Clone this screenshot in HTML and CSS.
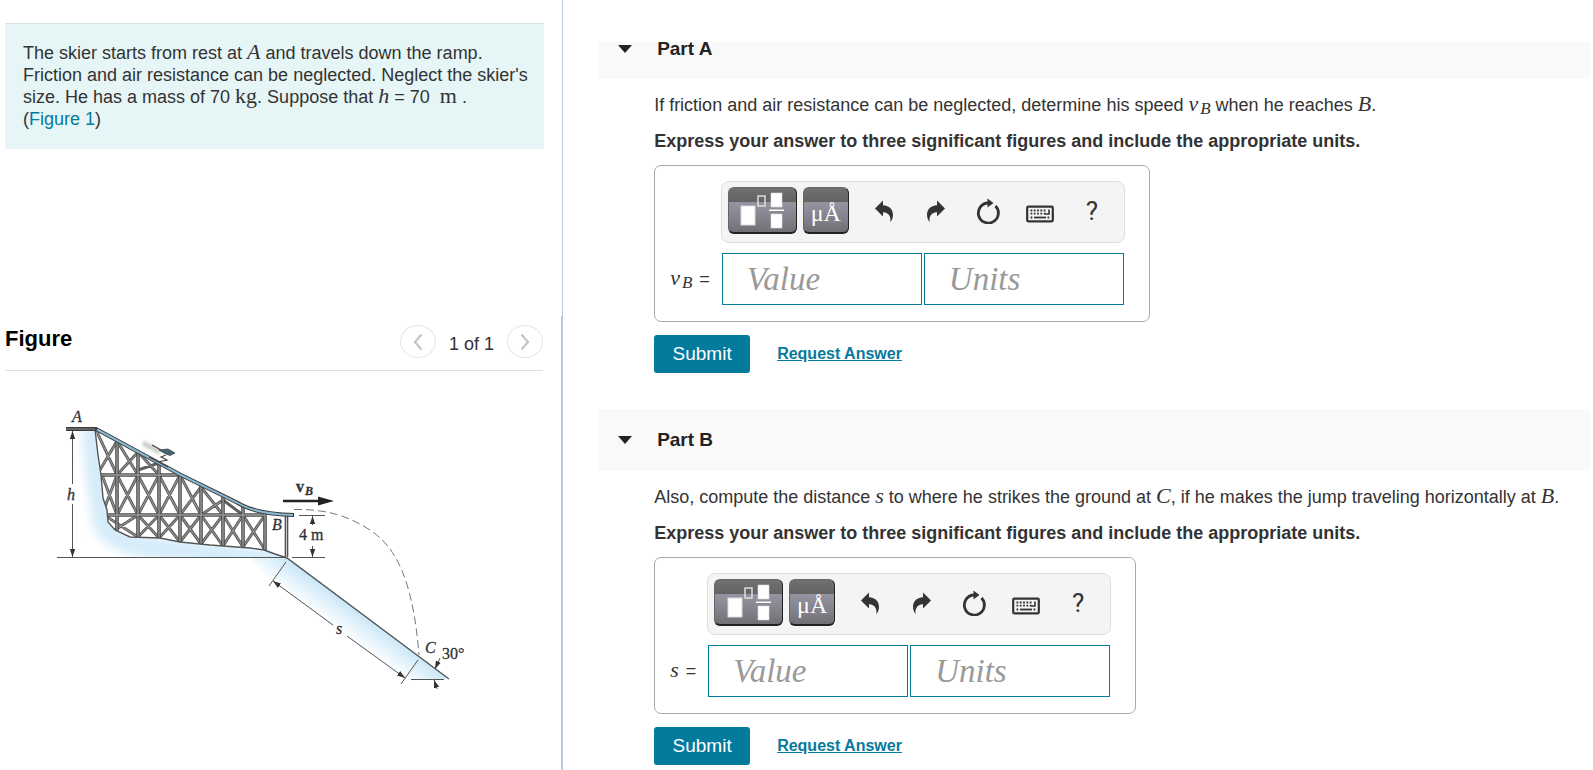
FILE: index.html
```html
<!DOCTYPE html>
<html lang="en">
<head>
<meta charset="utf-8">
<title>Skier on a ramp</title>
<link rel="stylesheet" href="styles.css">
</head>
<body>
<svg class="sprite" width="0" height="0" aria-hidden="true">
  <symbol id="i-template" viewBox="0 0 44 37">
    <rect x="1" y="14" width="14" height="19" fill="#fff" stroke="#dcdce0"/>
    <rect x="18" y="4" width="7" height="10" fill="none" stroke="#e4e4e6" stroke-width="1.4"/>
    <rect x="31" y="1" width="11" height="14" fill="#fff" stroke="#dcdce0" stroke-width=".6"/>
    <rect x="29" y="17.500" width="15" height="1.500" fill="#fff"/>
    <rect x="31" y="22" width="11" height="14" fill="#fff" stroke="#dcdce0" stroke-width=".6"/>
  </symbol>
  <symbol id="i-undo" viewBox="0 0 20 24">
    <path d="M1 9.500 9 1.500V6.200C15.500 6.500 19 10.500 19 16c0 3-1.300 5.500-2.600 7.200C17 18.500 15.500 13.500 9 13.300V17.500Z" fill="#333"/>
  </symbol>
  <symbol id="i-redo" viewBox="0 0 20 24">
    <path d="M19 9.500 11 1.500V6.200C4.500 6.500 1 10.500 1 16c0 3 1.300 5.500 2.600 7.200C3 18.500 4.500 13.500 11 13.300V17.500Z" fill="#333"/>
  </symbol>
  <symbol id="i-reset" viewBox="0 0 24 26">
    <path d="M19.500 8A10 10 0 1 1 12 5" fill="none" stroke="#333" stroke-width="2.800"/>
    <path d="M11.500.500 17.500 5 11.500 9.500Z" fill="#333"/>
  </symbol>
  <symbol id="i-keyboard" viewBox="0 0 28 18">
    <rect x="1.200" y="1.700" width="25.600" height="14.600" rx="1" fill="none" stroke="#333" stroke-width="2.200"/>
    <path d="M4.500 5.500h16M4.500 8.700h16M4.500 12.500h2M21.500 12.500h2" stroke="#333" stroke-width="1.800" stroke-dasharray="1.800 1.500"/>
    <path d="M8 12.500h12" stroke="#333" stroke-width="1.800"/>
    <path d="M23 4.500v4.500h-4" fill="none" stroke="#333" stroke-width="1.600"/>
  </symbol>
</svg>

<div class="page">
  <aside class="left">
    <section class="statement">
      <p class="problem">The skier starts from rest at <i class="math">A</i> and travels down the ramp. Friction and air resistance can be neglected. Neglect the skier's size. He has a mass of 70 <span class="math">kg</span>. Suppose that <i class="math">h</i> = 70 &nbsp;<span class="math">m</span> . <span class="ref">(<a href="#figure">Figure 1</a>)</span></p>
    </section>
    <section class="figure" id="figure">
      <header class="figure-head">
        <h2>Figure</h2>
        <nav class="pager" aria-label="Figures">
          <button type="button" class="round" aria-label="Previous figure"><svg width="10" height="18" viewBox="0 0 10 18"><path d="M8.500 1.500 2 9l6.500 7.500" fill="none" stroke="#c4c4c4" stroke-width="2.200"/></svg></button>
          <span>1 of 1</span>
          <button type="button" class="round" aria-label="Next figure"><svg width="10" height="18" viewBox="0 0 10 18"><path d="M1.500 1.500 8 9l-6.500 7.500" fill="none" stroke="#c4c4c4" stroke-width="2.200"/></svg></button>
        </nav>
      </header>
      <svg class="drawing" viewBox="50 400 430 300" width="430" height="300" role="img" aria-label="Ski ramp from A to B, with landing slope to C">
        <defs>
          <filter id="soft" x="-20%" y="-20%" width="140%" height="140%"><feGaussianBlur stdDeviation="5"/></filter>
          <filter id="haze" x="-50%" y="-50%" width="200%" height="200%"><feGaussianBlur stdDeviation="1.500"/></filter>
          <linearGradient id="snow" gradientUnits="userSpaceOnUse" x1="287" y1="558" x2="270" y2="581"><stop offset="0" stop-color="#c9e6f6"/><stop offset=".4" stop-color="#dff1fb"/><stop offset="1" stop-color="#fff"/></linearGradient>
          <clipPath id="ground"><path d="M66 431H95L98 455 101 475 103 498 107 510 108 522 115 530 130 537 160 538 180 542 210 545 250 548 264 550 275 554 287 558H66Z"/></clipPath>
          <clipPath id="truss"><path d="M96 430 180 475 237 503 255 510 290 515V560L264 550 250 548 210 545 180 542 160 538 130 537 115 530 108 522 107 510 103 498 101 475Z"/></clipPath>
          <marker id="tip" viewBox="0 0 8 6" refX="8" refY="3" markerWidth="8" markerHeight="6" markerUnits="userSpaceOnUse" orient="auto"><path d="M0 .300 8 3 0 5.700Z" fill="#333"/></marker>
        </defs>
        <path d="M287 558 449 679H416L404 681 270 583 250 557Z" fill="url(#snow)"/>
        <g clip-path="url(#ground)">
          <path d="M92 425 97 480 104 525Q117 546 165 549L290 562" fill="none" stroke="#d6ecf9" stroke-width="22" filter="url(#soft)"/>
        </g>
        <g clip-path="url(#truss)">
          <g fill="none">
            <path d="M96 430 117 475M117 441 97 475M117 441 138 475M138 452 117 475M138 470 159 463M138 452 159 475M102 475 117 515M117 475 102 515M117 475 138 515M138 475 117 515M138 475 159 515M159 475 138 515M159 475 180 515M180 475 159 515M180 475 201 515M201 487 180 515M201 487 223 515M223 500 201 515M223 500 243 515M104 515 138 537M138 515 115 530M138 515 159 538M159 515 138 537M159 515 180 542M180 515 159 538M180 515 201 544M201 515 180 542M201 515 223 546M223 515 201 544M223 515 243 547M243 515 223 546M243 515 265 550M265 515 243 547" stroke="#606060" stroke-width="3"/>
            <path d="M96 430 117 475M117 441 97 475M117 441 138 475M138 452 117 475M138 452 159 475M102 475 117 515M117 475 102 515M117 475 138 515M138 475 117 515M138 475 159 515M159 475 138 515M159 475 180 515M180 475 159 515M180 475 201 515M201 487 180 515M201 487 223 515M223 500 201 515M104 515 138 537M138 515 115 530M138 515 159 538M159 515 138 537M159 515 180 542M180 515 159 538M180 515 201 544M201 515 180 542M201 515 223 546M223 515 201 544M223 515 243 547M243 515 223 546M243 515 265 550M265 515 243 547" stroke="#999" stroke-width="1"/>
          </g>
          <path d="M117 438V535M138 448V540M159 460V542M180 470V545M201 484V547M223 496V549M243 506V550M265 512V552M100 475H184M105 515H266" fill="none" stroke="#4c4c4c" stroke-width="3.600"/>
          <path d="M117 438V535M138 448V540M159 460V542M180 470V545M201 484V547M223 496V549M243 506V550M265 512V552M100 475H184M105 515H266" fill="none" stroke="#999" stroke-width="1.400"/>
        </g>
        <path d="M286.500 516V557" stroke="#444" stroke-width="3.600"/><path d="M286.500 516V557" stroke="#ccc" stroke-width="1.200"/>
        <path d="M95 429 98 455 101 475 103 498 107 510 108 522 115 530 130 537 160 538 180 542 210 545 250 548 264 550 275 554 287 558 449 679" fill="none" stroke="#555" stroke-width="1.400"/>
        <path d="M66 429H96L180 474.500 237 502.500Q255 514 294 515" fill="none" stroke="#3c3c3c" stroke-width="4"/>
        <path d="M97 429.500 180 474.500 237 502.500Q255 514 293 515" fill="none" stroke="#86b9d0" stroke-width="2"/>
        <path d="M66 429H95" stroke="#888" stroke-width="1"/>
        <path d="M143 443 160 452" stroke="#ccc" stroke-width="5" filter="url(#haze)"/>
        <g stroke="#444">
          <path d="M152 445 168 454" stroke-width="1.200"/>
          <path d="M159 450 168 449 175 453 170 455.500 164 453Z" fill="#3d6678" stroke-width=".8"/>
          <path d="M166 455 161 457 167 460 158 462" fill="none" stroke-width="1.200"/>
          <path d="M149 457 168 467" stroke-width="1.400"/>
        </g>
        <g fill="none" stroke="#555" stroke-width="1">
          <path d="M57 557.500H287M299 515.500H325M292 557.500H325M286 562 269 586M418 660 401 684M411 679.500H444"/>
          <g marker-end="url(#tip)">
            <path d="M72.500 484V431"/>
            <path d="M72.500 504V557"/>
            <path d="M312.500 525V516"/>
            <path d="M312.500 546V557"/>
            <path d="M333 625 273 581"/>
            <path d="M347 636 405 678"/>
            <path d="M440 658 435 669"/>
            <path d="M437 689 434 680"/>
          </g>
          <path d="M294 509.500C320 509 344 513 370 530S413 580 419 655" stroke="#777" stroke-dasharray="8 4"/>
        </g>
        <path d="M283 501H320" stroke="#222" stroke-width="2.600"/><path d="M318 496.500 334 501 318 505.500Z" fill="#222"/>
        <g class="labels">
          <text x="72" y="422" class="var">A</text>
          <text x="67" y="500" class="var">h</text>
          <text x="296" y="492" class="vel">v</text><text x="305" y="495" class="sub">B</text>
          <text x="272" y="530" class="var">B</text>
          <text x="299" y="540">4 m</text>
          <text x="336" y="634" class="var">s</text>
          <text x="425" y="653" class="var">C</text>
          <text x="442" y="659">30°</text>
        </g>
      </svg>
    </section>
  </aside>

  <main class="right">
    <section class="part">
      <header class="part-head cut"><h2><button type="button" class="toggle"><span class="caret"></span>Part A</button></h2></header>
      <div class="part-body">
        <p>If friction and air resistance can be neglected, determine his speed <i class="math">v<sub>B</sub></i> when he reaches <i class="math">B</i>.</p>
        <p class="strong">Express your answer to three significant figures and include the appropriate units.</p>
        <form class="answer">
          <div class="tools">
            <button type="button" class="dark wide" aria-label="Templates"><svg width="44" height="37"><use href="#i-template"/></svg></button>
            <button type="button" class="dark">μÅ</button>
            <div class="plain">
              <button type="button" class="tool" aria-label="Undo"><svg width="20" height="24"><use href="#i-undo"/></svg></button>
              <button type="button" class="tool" aria-label="Redo"><svg width="20" height="24"><use href="#i-redo"/></svg></button>
              <button type="button" class="tool" aria-label="Reset"><svg width="24" height="26"><use href="#i-reset"/></svg></button>
              <button type="button" class="tool low" aria-label="Keyboard"><svg width="28" height="18"><use href="#i-keyboard"/></svg></button>
              <button type="button" class="tool">?</button>
            </div>
          </div>
          <label for="va" class="eq"><i class="math">v<sub>B</sub></i> =</label>
          <div class="fields"><input id="va" placeholder="Value"><input placeholder="Units" aria-label="Units"></div>
        </form>
        <div class="actions"><button type="submit" class="submit">Submit</button><a href="#request">Request Answer</a></div>
      </div>
    </section>
    <section class="part">
      <header class="part-head"><h2><button type="button" class="toggle"><span class="caret"></span>Part B</button></h2></header>
      <div class="part-body">
        <p>Also, compute the distance <i class="math">s</i> to where he strikes the ground at <i class="math">C</i>, if he makes the jump traveling horizontally at <i class="math">B</i>.</p>
        <p class="strong">Express your answer to three significant figures and include the appropriate units.</p>
        <form class="answer">
          <div class="tools">
            <button type="button" class="dark wide" aria-label="Templates"><svg width="44" height="37"><use href="#i-template"/></svg></button>
            <button type="button" class="dark">μÅ</button>
            <div class="plain">
              <button type="button" class="tool" aria-label="Undo"><svg width="20" height="24"><use href="#i-undo"/></svg></button>
              <button type="button" class="tool" aria-label="Redo"><svg width="20" height="24"><use href="#i-redo"/></svg></button>
              <button type="button" class="tool" aria-label="Reset"><svg width="24" height="26"><use href="#i-reset"/></svg></button>
              <button type="button" class="tool low" aria-label="Keyboard"><svg width="28" height="18"><use href="#i-keyboard"/></svg></button>
              <button type="button" class="tool">?</button>
            </div>
          </div>
          <label for="vb" class="eq"><i class="math">s</i> =</label>
          <div class="fields"><input id="vb" placeholder="Value"><input placeholder="Units" aria-label="Units"></div>
        </form>
        <div class="actions"><button type="submit" class="submit">Submit</button><a href="#request">Request Answer</a></div>
      </div>
    </section>
  </main>
</div>
</body>
</html>
```

FILE: styles.css
```css
* { box-sizing: border-box; }
body {
  margin: 0;
  background: #fff;
  color: #333;
  font: 18px/22px "Liberation Sans", Arial, sans-serif;
}
h2, p { margin: 0; }
button { font: inherit; cursor: pointer; }
a { color: #047a9c; }
.sprite { position: absolute; }

.page {
  display: grid;
  grid-template-columns: 35.35% minmax(0, 1fr);
  min-height: 100vh;
}
.left {
  display: flex;
  flex-direction: column;
}
.statement {
  min-height: 316px;
  padding: 23px 18px 0 5px;
  border-right: 1px solid #bcc8dc;
}
.problem {
  padding: 18px 6px 19px 18px;
  border-top: 1px solid #d5e3e3;
  background: #e6f6f7;
}
.problem a { text-decoration: none; }
.ref { white-space: nowrap; }
.math {
  font-family: "Liberation Serif", "Times New Roman", serif;
  font-size: 22px;
  line-height: 0;
}
.math sub {
  margin-left: 2px;
  font-size: 17px;
  line-height: 0;
  vertical-align: -3px;
}

.figure {
  flex: 1;
  padding: 0 18px 0 5px;
  border-right: 2px solid #bcc8dc;
}
.figure-head {
  display: flex;
  justify-content: space-between;
  height: 55px;
  padding-top: 9px;
  border-bottom: 1px solid #ddd;
}
.figure-head h2 {
  padding-top: 1px;
  color: #000;
  font-size: 22px;
  line-height: 26px;
}
.pager {
  display: flex;
  gap: 13px;
}
.pager span { padding-top: 8px; }
.round {
  display: flex;
  align-items: center;
  justify-content: center;
  width: 36px;
  height: 33px;
  padding: 0;
  border: 1px solid #e4e4e4;
  border-radius: 50%;
  background: #fff;
}
.drawing {
  display: block;
  margin: 29px 0 0 45px;
}
.labels {
  fill: #333;
  stroke: #333;
  stroke-width: .3px;
  font-family: "Liberation Serif", "Times New Roman", serif;
  font-size: 16px;
}
.var { font-style: italic; }
.vel { font-weight: bold; }
.sub { font-size: 12px; font-style: italic; font-weight: bold; }

.right { padding: 42px 3px 0 36px; }
.part-head {
  display: flex;
  align-items: center;
  height: 62px;
  background: #f9f9f9;
}
.part-head.cut {
  align-items: flex-start;
  height: 37px;
}
.part-head h2 { font-size: 19px; line-height: 22px; }
.cut h2 { margin-top: -4px; }
.toggle {
  display: flex;
  align-items: center;
  gap: 25px;
  padding: 0 0 0 19px;
  border: 0;
  background: none;
  color: #222;
}
.caret {
  border: 7px solid transparent;
  border-top: 8px solid #222;
  border-bottom: 0;
}
.part-body { padding: 15px 0 36px 55px; }
.part-body p { line-height: 22px; }
.part-body .strong { margin-top: 14px; font-weight: bold; }

.answer {
  display: inline-grid;
  grid-template-columns: auto auto;
  gap: 10px 12px;
  margin-top: 13px;
  padding: 15px 24px 16px 15px;
  border: 1px solid #aaa;
  border-radius: 7px;
  vertical-align: top;
}
.tools {
  grid-column: 2;
  display: flex;
  align-items: flex-start;
  gap: 6px;
  width: 404px;
  height: 62px;
  margin-left: -1px;
  padding: 5px 4px 0 6px;
  border: 1px solid #ddd;
  border-radius: 8px;
  background: #f4f4f4;
}
.dark {
  display: flex;
  align-items: center;
  justify-content: center;
  width: 46px;
  height: 47px;
  padding: 6px 0 0;
  border: 1px solid #666;
  border-right-color: #222;
  border-bottom: 2px solid #222;
  border-radius: 6px;
  background: linear-gradient(#707070, #636363 32%, #9694a0 33%, #727076);
  color: #fff;
  font: 24px/28px "Liberation Serif", "Times New Roman", serif;
}
.wide {
  width: 69px;
  padding: 0;
}
.plain {
  display: flex;
  gap: 6px;
  padding-left: 6px;
}
.tool {
  display: flex;
  align-items: center;
  justify-content: center;
  width: 46px;
  height: 47px;
  padding: 0;
  border: 0;
  background: none;
  color: #333;
  font: 26px/30px Roboto, sans-serif;
}
.low { padding-top: 6px; }
.eq { align-self: center; }
.eq .math { margin-right: 2px; }
.fields {
  display: flex;
  gap: 2px;
}
.fields input {
  width: 200px;
  height: 52px;
  padding: 0 24px;
  border: 1px solid #047a9c;
  border-radius: 0;
  color: #333;
  font: 33px/40px "Liberation Serif", "Times New Roman", serif;
}
.fields input::placeholder {
  color: #999;
  font-style: italic;
}
.actions {
  display: flex;
  align-items: center;
  gap: 27px;
  margin-top: 13px;
}
.submit {
  width: 96px;
  height: 38px;
  padding: 0;
  border: 0;
  border-radius: 3px;
  background: #047a9c;
  color: #fff;
  font-size: 19px;
}
.actions a {
  font-size: 16px;
  font-weight: bold;
}
```
